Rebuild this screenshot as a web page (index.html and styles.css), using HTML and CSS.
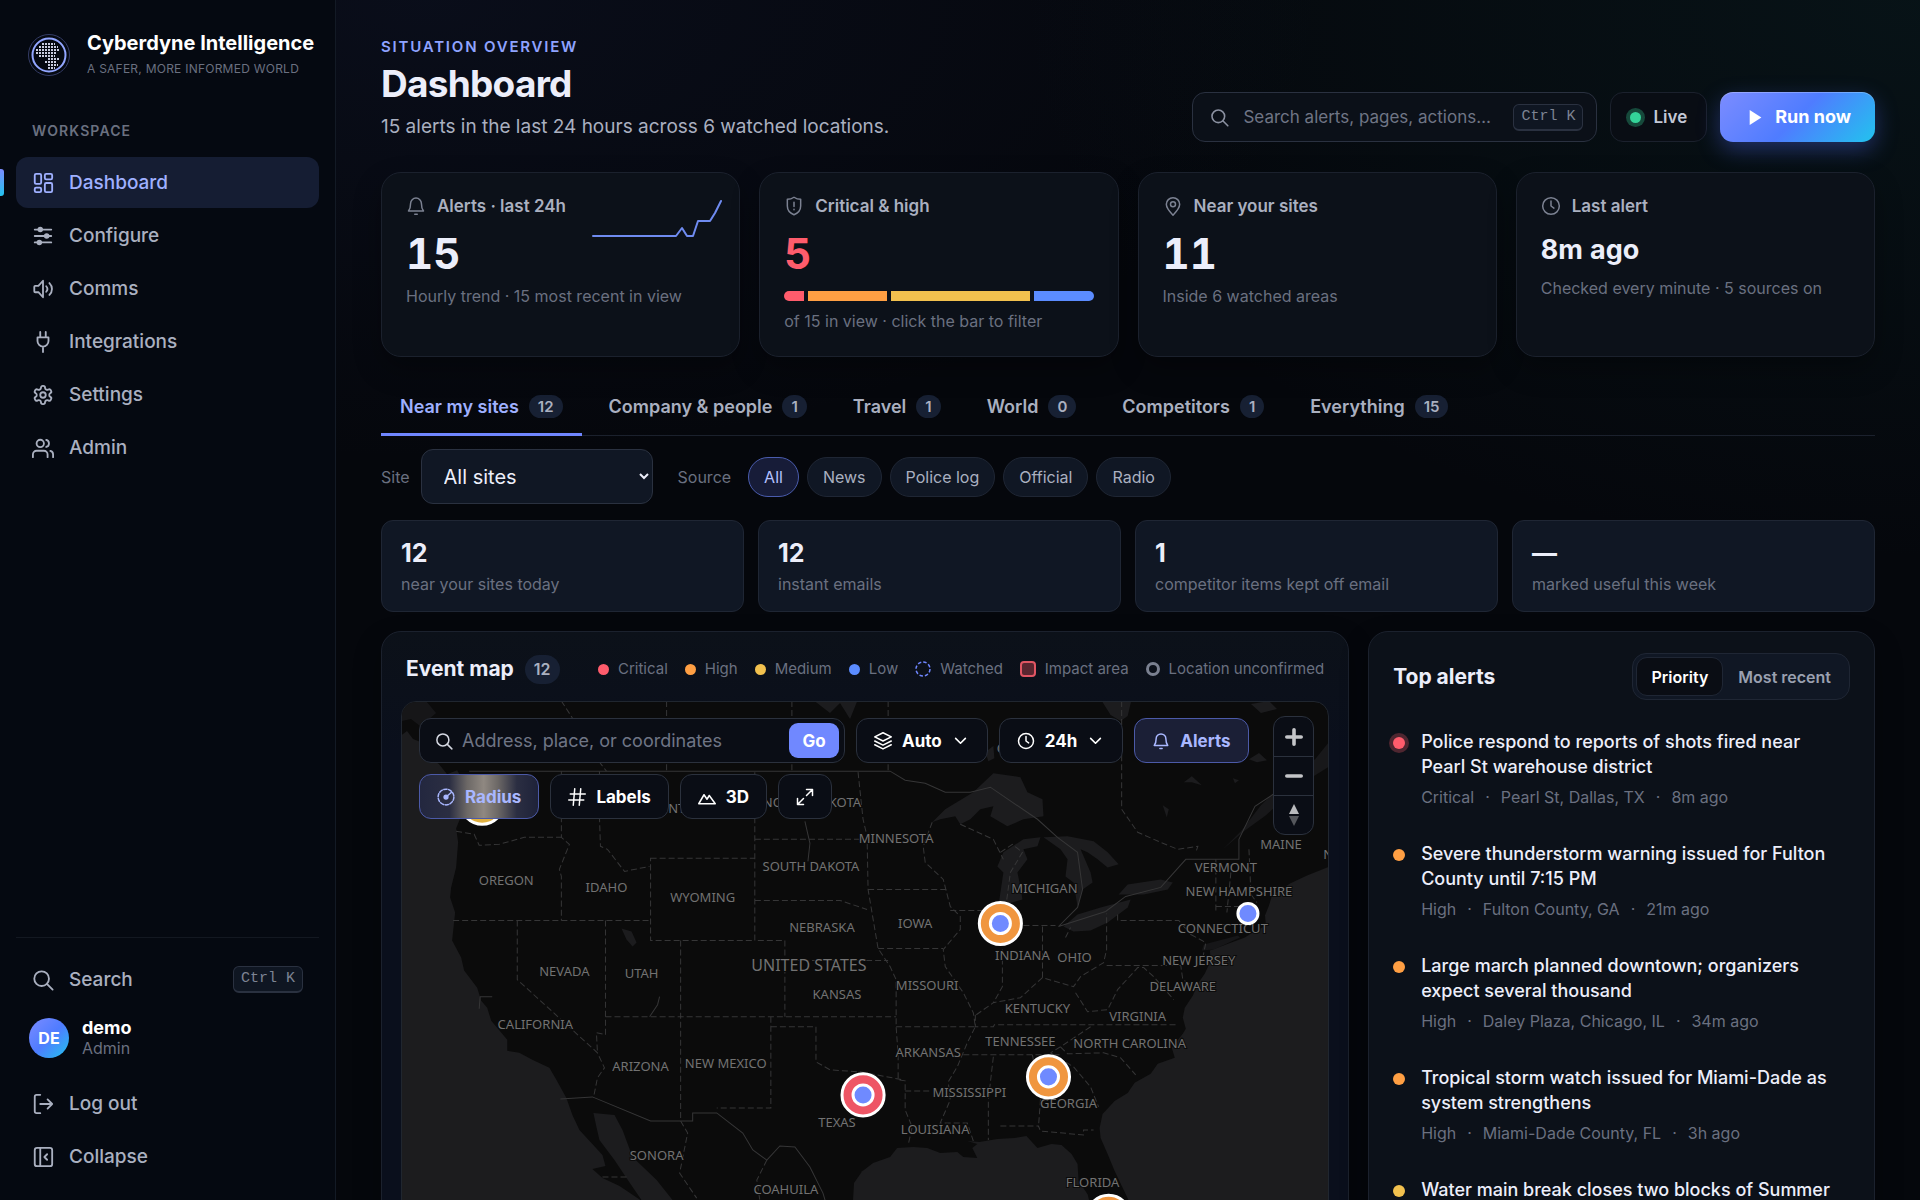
FILE: index.html
```html
<!DOCTYPE html>
<html lang="en">
<head>
<meta charset="utf-8">
<meta name="viewport" content="width=device-width, initial-scale=1">
<title>Dashboard · Cyberdyne Intelligence</title>
<link rel="stylesheet" href="styles.css">
</head>
<body>
<svg class="sprite" aria-hidden="true">
  <defs>
    <symbol id="i-dashboard" viewBox="0 0 24 24"><rect x="3" y="2" width="7" height="11" rx="1.5"/><rect x="14" y="2" width="8" height="6" rx="1.5"/><rect x="14" y="12" width="8" height="10" rx="1.5"/><rect x="3" y="17" width="7" height="5" rx="1.5"/></symbol>
    <symbol id="i-sliders" viewBox="0 0 24 24"><path d="M3 5h18M3 12h18M3 19h18"/><g fill="currentColor"><circle cx="9" cy="5" r="2"/><circle cx="16" cy="12" r="2"/><circle cx="8" cy="19" r="2"/></g></symbol>
    <symbol id="i-sound" viewBox="0 0 24 24"><path d="M12 3 7 8.500H3.500a1 1 0 0 0-1 1v5a1 1 0 0 0 1 1H7l5 5.500zM15.500 9a4.500 4.500 0 0 1 0 6M19 5.500a9 9 0 0 1 0 13"/></symbol>
    <symbol id="i-plug" viewBox="0 0 24 24"><path d="M9 1v6M15 1v6M12 17v6M6 7h12v4a6 6 0 0 1-12 0z"/></symbol>
    <symbol id="i-gear" viewBox="0 0 24 24"><path d="M12.220 2h-.44a2 2 0 0 0-2 2v.18a2 2 0 0 1-1 1.730l-.43.25a2 2 0 0 1-2 0l-.15-.08a2 2 0 0 0-2.730.73l-.22.38a2 2 0 0 0 .73 2.730l.15.1a2 2 0 0 1 1 1.720v.51a2 2 0 0 1-1 1.740l-.15.09a2 2 0 0 0-.73 2.730l.22.38a2 2 0 0 0 2.730.73l.15-.08a2 2 0 0 1 2 0l.43.25a2 2 0 0 1 1 1.730V20a2 2 0 0 0 2 2h.44a2 2 0 0 0 2-2v-.18a2 2 0 0 1 1-1.730l.43-.25a2 2 0 0 1 2 0l.15.08a2 2 0 0 0 2.730-.73l.22-.39a2 2 0 0 0-.73-2.730l-.15-.08a2 2 0 0 1-1-1.740v-.5a2 2 0 0 1 1-1.740l.15-.09a2 2 0 0 0 .73-2.730l-.22-.38a2 2 0 0 0-2.730-.73l-.15.08a2 2 0 0 1-2 0l-.43-.25a2 2 0 0 1-1-1.730V4a2 2 0 0 0-2-2z"/><circle cx="12" cy="12" r="3"/></symbol>
    <symbol id="i-users" viewBox="0 0 24 24"><path d="M17 22v-3a4 4 0 0 0-4-4H5a4 4 0 0 0-4 4v3M23 22v-3a4 4 0 0 0-3-3.870M15.500 3.130a4 4 0 0 1 0 7.750"/><circle cx="9" cy="7" r="4"/></symbol>
    <symbol id="i-search" viewBox="0 0 24 24"><circle cx="10.500" cy="10.500" r="8"/><path d="m16.500 16.500 6 6"/></symbol>
    <symbol id="i-logout" viewBox="0 0 24 24"><path d="M9 22H5a2 2 0 0 1-2-2V4a2 2 0 0 1 2-2h4M17 17l5-5-5-5M22 12H9"/></symbol>
    <symbol id="i-collapse" viewBox="0 0 24 24"><rect x="3" y="2" width="19" height="20" rx="2.500"/><path d="M9 2v20M16.500 9l-3 3 3 3"/></symbol>
    <symbol id="i-bell" viewBox="0 0 24 24"><path d="M3 18c2-2.500 2.500-5 2.500-9a6.500 6.500 0 0 1 13 0c0 4 .5 6.500 2.500 9zM10.500 22h3"/></symbol>
    <symbol id="i-shield" viewBox="0 0 24 24"><path d="M12 1.500c2.500 1.700 5 2.500 8 2.500v8c0 5-3 8.500-8 10.500-5-2-8-5.500-8-10.500V4c3 0 5.500-.8 8-2.500zM12 7.500v5M12 16v.5"/></symbol>
    <symbol id="i-pin" viewBox="0 0 24 24"><path d="M20 10c0 5-4.500 9.500-8 13-3.500-3.500-8-8-8-13a8 8 0 0 1 16 0z"/><circle cx="12" cy="10" r="3"/></symbol>
    <symbol id="i-clock" viewBox="0 0 24 24"><circle cx="12" cy="12" r="10"/><path d="M12 6v6l3.500 2.500"/></symbol>
    <symbol id="i-layers" viewBox="0 0 24 24"><path d="m12 1 11 5.500L12 12 1 6.500zM1 12l11 5.500L23 12M1 17l11 5.500L23 17"/></symbol>
    <symbol id="i-chevron" viewBox="0 0 24 24"><path d="m3 8 9 9 9-9"/></symbol>
    <symbol id="i-radius" viewBox="0 0 24 24"><circle cx="12" cy="12" r="10.500" stroke-dasharray="4.400 2.200"/><circle cx="12" cy="12" r="2.500" fill="currentColor"/><path d="m12 12 7-6"/></symbol>
    <symbol id="i-hash" viewBox="0 0 24 24"><path d="M3 8h20M1 16h20M9 1 7 23M17 1l-2 22"/></symbol>
    <symbol id="i-mountain" viewBox="0 0 24 24"><path d="M1 21 8 9l4 6 3-5 8 11z"/></symbol>
    <symbol id="i-expand" viewBox="0 0 24 24"><path d="M14 2h8v8M22 2l-8 8M10 22H2v-8M2 22l8-8"/></symbol>
    <linearGradient id="spark-fill" x1="0" y1="0" x2="0" y2="1"><stop offset="0" stop-color="#6f86ff" stop-opacity=".35"/><stop offset="1" stop-color="#6f86ff" stop-opacity="0"/></linearGradient>
  </defs>
</svg>

<div class="app">
  <aside class="sidebar">
    <div class="brand">
      <svg class="brand-mark" viewBox="0 0 44 44" aria-hidden="true">
        <circle cx="22" cy="22" r="20.500" stroke="#343c66" stroke-width="1"/>
        <circle cx="22" cy="22" r="16.500" stroke="#92a6ff" stroke-width="2"/>
        <g class="globe-dots">
          <path d="M15 11h13M12 14h19M9 17h24M9 20h21M12 23h16M21 26h11M18 29h12M21 32h10M21 35h7"/>
        </g>
      </svg>
      <div>
        <p class="brand-name">Cyberdyne Intelligence</p>
        <p class="brand-tag">A safer, more informed world</p>
      </div>
    </div>
    <p class="nav-label">Workspace</p>
    <nav class="nav">
      <a class="nav-item is-active" href="#dashboard"><svg class="icon"><use href="#i-dashboard"/></svg>Dashboard</a>
      <a class="nav-item" href="#configure"><svg class="icon"><use href="#i-sliders"/></svg>Configure</a>
      <a class="nav-item" href="#comms"><svg class="icon"><use href="#i-sound"/></svg>Comms</a>
      <a class="nav-item" href="#integrations"><svg class="icon"><use href="#i-plug"/></svg>Integrations</a>
      <a class="nav-item" href="#settings"><svg class="icon"><use href="#i-gear"/></svg>Settings</a>
      <a class="nav-item" href="#admin"><svg class="icon"><use href="#i-users"/></svg>Admin</a>
    </nav>
    <div class="sidebar-foot">
      <button class="nav-item" type="button"><svg class="icon"><use href="#i-search"/></svg>Search<kbd>Ctrl K</kbd></button>
      <div class="user">
        <span class="avatar">DE</span>
        <div><p class="user-name">demo</p><p class="user-role">Admin</p></div>
      </div>
      <button class="nav-item" type="button"><svg class="icon"><use href="#i-logout"/></svg>Log out</button>
      <button class="nav-item" type="button"><svg class="icon"><use href="#i-collapse"/></svg>Collapse</button>
    </div>
  </aside>

  <main class="main">
    <header class="page-head">
      <div>
        <p class="eyebrow">Situation overview</p>
        <h1>Dashboard</h1>
        <p class="lede">15 alerts in the last 24 hours across 6 watched locations.</p>
      </div>
      <div class="head-actions">
        <label class="search"><svg class="icon"><use href="#i-search"/></svg><input type="text" placeholder="Search alerts, pages, actions…" aria-label="Search alerts, pages, actions"><kbd>Ctrl K</kbd></label>
        <button class="live" type="button"><span class="live-dot"></span>Live</button>
        <button class="run" type="button"><svg viewBox="0 0 12 16" aria-hidden="true"><path d="M1 1v14l11-7z"/></svg>Run now</button>
      </div>
    </header>

    <section class="stats">
      <article class="card">
        <h2 class="card-label"><svg class="icon"><use href="#i-bell"/></svg>Alerts · last 24h</h2>
        <p class="value">15</p>
        <p class="note">Hourly trend · 15 most recent in view</p>
        <svg class="spark" viewBox="0 0 132 40" aria-hidden="true">
          <path fill="url(#spark-fill)" d="M3 37h83l6-8 5 8h6l5-15h12l5-8 6-12v35z"/>
          <path class="spark-line" d="M3 37h83l6-8 5 8h6l5-15h12l5-8 6-12"/>
        </svg>
      </article>
      <article class="card">
        <h2 class="card-label"><svg class="icon"><use href="#i-shield"/></svg>Critical &amp; high</h2>
        <p class="value is-critical">5</p>
        <div class="sevbar">
          <button class="bg-critical" type="button" style="flex-grow:1" aria-label="Critical: 1"></button>
          <button class="bg-high" type="button" style="flex-grow:4" aria-label="High: 4"></button>
          <button class="bg-medium" type="button" style="flex-grow:7" aria-label="Medium: 7"></button>
          <button class="bg-low" type="button" style="flex-grow:3" aria-label="Low: 3"></button>
        </div>
        <p class="note">of 15 in view · click the bar to filter</p>
      </article>
      <article class="card">
        <h2 class="card-label"><svg class="icon"><use href="#i-pin"/></svg>Near your sites</h2>
        <p class="value">11</p>
        <p class="note">Inside 6 watched areas</p>
      </article>
      <article class="card">
        <h2 class="card-label"><svg class="icon"><use href="#i-clock"/></svg>Last alert</h2>
        <p class="value is-text">8m ago</p>
        <p class="note">Checked every minute · 5 sources on</p>
      </article>
    </section>

    <div class="tabs" role="tablist">
      <button class="tab is-active" role="tab" aria-selected="true" type="button">Near my sites<span class="count">12</span></button>
      <button class="tab" role="tab" type="button">Company &amp; people<span class="count">1</span></button>
      <button class="tab" role="tab" type="button">Travel<span class="count">1</span></button>
      <button class="tab" role="tab" type="button">World<span class="count">0</span></button>
      <button class="tab" role="tab" type="button">Competitors<span class="count">1</span></button>
      <button class="tab" role="tab" type="button">Everything<span class="count">15</span></button>
    </div>

    <div class="filters">
      <label for="site">Site</label>
      <select id="site"><option>All sites</option></select>
      <span class="source-label">Source</span>
      <div class="pills">
        <button class="pill is-active" type="button">All</button>
        <button class="pill" type="button">News</button>
        <button class="pill" type="button">Police log</button>
        <button class="pill" type="button">Official</button>
        <button class="pill" type="button">Radio</button>
      </div>
    </div>

    <section class="minis">
      <div class="mini"><p class="mini-value">12</p><p class="mini-note">near your sites today</p></div>
      <div class="mini"><p class="mini-value">12</p><p class="mini-note">instant emails</p></div>
      <div class="mini"><p class="mini-value">1</p><p class="mini-note">competitor items kept off email</p></div>
      <div class="mini"><p class="mini-value">—</p><p class="mini-note">marked useful this week</p></div>
    </section>

    <div class="panels">
      <section class="panel map-panel">
        <header class="map-head">
          <h2>Event map</h2><span class="count count-lg">12</span>
          <ul class="legend">
            <li><i class="dot bg-critical"></i>Critical</li>
            <li><i class="dot bg-high"></i>High</li>
            <li><i class="dot bg-medium"></i>Medium</li>
            <li><i class="dot bg-low"></i>Low</li>
            <li><svg class="mark" viewBox="0 0 16 16"><circle cx="8" cy="8" r="7" stroke="#6f86ff" stroke-width="1.500" stroke-dasharray="3.500 2"/></svg>Watched</li>
            <li><i class="mark mark-area"></i>Impact area</li>
            <li><i class="mark-ring"></i>Location unconfirmed</li>
          </ul>
        </header>
        <div class="map">
          <svg class="map-canvas" viewBox="403 703 924 620" preserveAspectRatio="xMidYMin slice" role="img" aria-label="Map of the United States">
            <g class="water">
              <path d="M400 738l8-6 6 8 10 4-2 8 9 6 9 7 8 10 10-4 8 14-6 16 2 16-5 12 2 14-2 25-5 20-1 10 5 15-3 28 9 17 3 13 13 17 4 13 6 7 4 13 16 19v11l12 2 13 7 17 8 7 12 10 18 6 17 7 15 12 13 11 12 3 11-13 3 10 9 17 8 30 20v120H400z"/>
              <path d="M594 1113l21 2 8 15 10 27 24 23 16 20 20 40h-30l-21-40-15-22-12-18-15-20-3-13z"/>
              <path d="M853 1200l1-17 9-13-3 3 13-10 17-6 7-9 16-1 14 1 13 5 17-1 6 5 14 1-5-10 5-4-10-3 12 1 18-3 17-1 12-2 11 12 14-4 10 1 10 9 6 10 1 17 9 13 10 40 20 20 20-30-10-26-13-27-7-17-7-16-1-10 3-14 12-13 13-8 7-10 16-9 7-10 17-6-3-10 11-14 3-5-3-11 2-10 8-12 5-12 7-10 6-13-1-10 35-13 6-4 15-8-1-10 4-10 3-10 18-12 17-8 20-8 12-2v480H840z"/>
              <path d="M932 823l13-13 28-17 20-19 27 4 7 15 15 7 1 17-20 3-16 7-17-10 3-10-13 3-10 10-10 5-5-8-15 3z"/>
              <path d="M1040 838l-17 2-20 13-6 14 6 6-5 34 24-7-2-13-3-14 10-13-4-10 14-3z"/>
              <path d="M1043 838l24-1 26 5 14 11 11 12-11 3-10-8-10-7-7-3 10 23 2 10-10 7-5 17-4-24-8-6 2-17-7-10z"/>
              <path d="M1063 927l14-12 23-7 30-8-3 8-20 15-17 8-17 1z"/>
              <path d="M1118 895l9-10 33-5 12 3-5 7-24 5z"/>
              <path d="M1222 850l18-18 20-26 26-26 28-20 13-16v24l-32 20-30 28-22 16z" opacity=".8"/>
              <path d="M1100 700h31l-4 17-7 5-10-6zM622 929l10 3 5 11-4 4-6-7zM985 753l8-6 1 12-6 3zM1250 705l18-3 8 8-16 4zM1183 783l8-6 10 9-10-3zM1248 760l10-6 8 7-10 2zM1162 806l6 4-2 8zM1232 779l6 2-4 3zM812 700l18 14 10-10 10 16 8-20z"/>
            </g>
            <g class="land-shade"><path d="M1203 945l34-9 2 2-26 12-12 1zM403 702h24l10 12-9 8 10 10-8 2-18-14-9 2z"/></g>
            <g class="border-solid">
              <path d="M470 772h420l15 9 20 3 20 9h25l20-5 47 32 20 18 20 15 5 37-5 18-19 19 47-15 20-15 35-9 25-28h53v-20l16-33 23-15 20-60M561 1099l32-2 58 24h42v-8h24l26 20 10 17 14 10 13-14 15 1 15 20 13 26 6 20"/>
              <path d="M480 1009l1-12h12M650 1017l8-12 2-8M805 822l5 22-2 18"/>
            </g>
            <g class="border">
              <path d="M457 832l18 3 5 11 20-1 25-7h39M562 702l11 17 24 30 3 14 7 9M667 702v70M792 702v70M888 702v70M562 772v66l8 7-10 25 2 7v44M454 921h197M518 921v59l80 73 7 15-7 10-4 20M606 921v114l-9-2 1 20M600 772v45l1 30 7 3 17 22 25-5M651 859h104v82H651zM755 773v168h30v76M681 941v180l7 12-8 40 17 25M606 1017h290M755 840h107M755 901h85l27 9M858 773l5 47 4 17 1 53 10 59 12 18 6 13v47l2 28v25l7 1v29l7 17-4 18M868 890h79M878 949h65M785 961h103M771 1017v91h-54M771 1027h45v35l14 8 30 2 43 8M767 1160l-10 20 3 20M603 1177h24"/>
              <path d="M932 823l-9 24 2 16 18 17 7 27 10 10v13l-17 20 2 17 18 26 10 20 2 14-8 16-10 24-9 15 2 18-10 23h27l6 18M960 825l33 15 10 20M950 911h34M1042 927v53M1023 926h32M1002 950v37l-9 16M976 1015l17-12 27-5 22-20 31 9 7-10 23-14 3-13v-36M1117 915v6h61l12 14M1106 966h74l2 14 8 5M1075 993l12 19 20-2 10-20 20-22h6l10 9 20 23M896 1027h79M975 1015v12h18l1-2h181M963 1055h97M1090 1027l-30 20-10 6M993 1057l-5 43v40M1032 1055l8 45-2 27M1000 1126h38l2 5 43 4v-5h10M905 1091h27M1050 1053l23 14 17 20 8 20M1060 1047l7 7 36-1 17 5 15 17M1121 702v108l16 23 23 10 17 7 20-3-2 6M1065 938l5-10M1215 860v52M1230 873l-4 40M1248 850l2 45 6 8M1215 907h36M1212 925h34M1190 935l15 8-3 15M1000 853l12-8 10 8-12 20-4 30"/>
            </g>
            <g class="map-labels">
              <text x="679" y="814">MONTANA</text><text x="812" y="808">NORTH DAKOTA</text><text x="1025" y="754">ONTARIO</text><text x="1327" y="860">N</text>
              <text x="507" y="886">OREGON</text><text x="607" y="893">IDAHO</text><text x="703" y="903">WYOMING</text><text x="811" y="872">SOUTH DAKOTA</text>
              <text x="822" y="932">NEBRASKA</text><text x="915" y="928">IOWA</text><text x="896" y="844">MINNESOTA</text><text x="1044" y="894">MICHIGAN</text>
              <text x="1225" y="873">VERMONT</text><text x="1238" y="897">NEW HAMPSHIRE</text><text x="1280" y="850">MAINE</text><text x="1222" y="933">CONNECTICUT</text>
              <text x="1022" y="960">INDIANA</text><text x="1074" y="962">OHIO</text><text x="1198" y="965">NEW JERSEY</text><text x="1182" y="991">DELAWARE</text>
              <text x="927" y="990">MISSOURI</text><text x="1037" y="1013">KENTUCKY</text><text x="1137" y="1021">VIRGINIA</text><text x="1020" y="1046">TENNESSEE</text>
              <text x="1129" y="1048">NORTH CAROLINA</text><text x="928" y="1057">ARKANSAS</text><text x="565" y="976">NEVADA</text><text x="642" y="978">UTAH</text>
              <text class="country" x="809" y="971">UNITED STATES</text><text x="837" y="999">KANSAS</text><text x="536" y="1029">CALIFORNIA</text><text x="641" y="1071">ARIZONA</text>
              <text x="726" y="1068">NEW MEXICO</text><text x="837" y="1127">TEXAS</text><text x="657" y="1160">SONORA</text><text x="786" y="1194">COAHUILA</text>
              <text x="969" y="1097">MISSISSIPPI</text><text x="935" y="1134">LOUISIANA</text><text x="1068" y="1108">GEORGIA</text><text x="1092" y="1187">FLORIDA</text>
            </g>
            <g class="pins">
              <circle class="p-medium" cx="483" cy="804" r="21"/><circle class="p-site" cx="483" cy="804" r="10"/>
              <circle class="p-high" cx="1000" cy="924" r="21"/><circle class="p-site" cx="1000" cy="924" r="10"/>
              <circle class="p-high" cx="1048" cy="1077" r="21"/><circle class="p-site" cx="1048" cy="1077" r="10"/>
              <circle class="p-critical" cx="863" cy="1095" r="21"/><circle class="p-site" cx="863" cy="1095" r="10"/>
              <circle class="p-high" cx="1108" cy="1216" r="21"/><circle class="p-site" cx="1108" cy="1216" r="10"/>
              <circle class="p-site" cx="1247" cy="914" r="10"/>
            </g>
          </svg>
          <div class="map-tools">
            <form class="map-search"><svg class="icon"><use href="#i-search"/></svg><input type="text" placeholder="Address, place, or coordinates" aria-label="Address, place, or coordinates"><button type="submit">Go</button></form>
            <button class="tool" type="button"><svg class="icon"><use href="#i-layers"/></svg>Auto<svg class="icon icon-sm"><use href="#i-chevron"/></svg></button>
            <button class="tool" type="button"><svg class="icon"><use href="#i-clock"/></svg>24h<svg class="icon icon-sm"><use href="#i-chevron"/></svg></button>
            <button class="tool is-active" type="button"><svg class="icon"><use href="#i-bell"/></svg>Alerts</button>
            <button class="tool is-active is-frosted" type="button"><svg class="icon"><use href="#i-radius"/></svg>Radius</button>
            <button class="tool" type="button"><svg class="icon"><use href="#i-hash"/></svg>Labels</button>
            <button class="tool" type="button"><svg class="icon"><use href="#i-mountain"/></svg>3D</button>
            <button class="tool" type="button" aria-label="Full screen"><svg class="icon"><use href="#i-expand"/></svg></button>
          </div>
          <div class="zoom">
            <button type="button" aria-label="Zoom in"><svg viewBox="0 0 20 20"><path class="stroke" d="M10 4v12M4 10h12"/></svg></button>
            <button type="button" aria-label="Zoom out"><svg viewBox="0 0 20 20"><path class="stroke" d="M4 10h12"/></svg></button>
            <button type="button" aria-label="Reset north"><svg viewBox="0 0 20 24"><path fill="#b9babd" d="M10 1l5 10H5z"/><path fill="#55575c" d="M10 23l5-10H5z"/></svg></button>
          </div>
        </div>
      </section>

      <section class="panel alerts-panel">
        <header class="alerts-head">
          <h2>Top alerts</h2>
          <div class="segmented"><button class="is-active" type="button">Priority</button><button type="button">Most recent</button></div>
        </header>
        <ul class="alerts">
          <li><i class="dot bg-critical has-halo"></i><div><h3>Police respond to reports of shots fired near Pearl St warehouse district</h3><p><span>Critical</span><span>·</span><span>Pearl St, Dallas, TX</span><span>·</span><span>8m ago</span></p></div></li>
          <li><i class="dot bg-high"></i><div><h3>Severe thunderstorm warning issued for Fulton County until 7:15 PM</h3><p><span>High</span><span>·</span><span>Fulton County, GA</span><span>·</span><span>21m ago</span></p></div></li>
          <li><i class="dot bg-high"></i><div><h3>Large march planned downtown; organizers expect several thousand</h3><p><span>High</span><span>·</span><span>Daley Plaza, Chicago, IL</span><span>·</span><span>34m ago</span></p></div></li>
          <li><i class="dot bg-high"></i><div><h3>Tropical storm watch issued for Miami-Dade as system strengthens</h3><p><span>High</span><span>·</span><span>Miami-Dade County, FL</span><span>·</span><span>3h ago</span></p></div></li>
          <li><i class="dot bg-medium"></i><div><h3>Water main break closes two blocks of Summer</h3></div></li>
        </ul>
      </section>
    </div>
  </main>
</div>
</body>
</html>
```
FILE: styles.css
```css
:root {
  --bg: #05070c;
  --card: #0c1119;
  --raised: #101724;
  --line: #1b212d;
  --line-strong: #2a3140;
  --text: #eceefa;
  --soft: #aab0c0;
  --muted: #6a7080;
  --accent: #6f86ff;
  --accent-text: #9fb0ff;
  --critical: #ff5c6c;
  --high: #ff9f43;
  --medium: #f2c14e;
  --low: #5b8cff;
  --grad: linear-gradient(135deg, #7c8cff, #4f7cff 50%, #22c3ee);
}

* { box-sizing: border-box; }
html, body { height: 100%; }
body {
  margin: 0;
  background: var(--bg);
  color: var(--text);
  font-family: Inter, "Liberation Sans", sans-serif;
  font-size: 17px;
  line-height: 20px;
}
h1, h2, h3, p, ul { margin: 0; padding: 0; font-weight: inherit; }
ul { list-style: none; }
button, input, select { font: inherit; color: inherit; }
button { background: none; border: 0; padding: 0; cursor: pointer; }
a { color: inherit; text-decoration: none; }

.sprite { display: none; }
.icon {
  width: 22px;
  height: 22px;
  flex: none;
  fill: none;
  stroke: currentColor;
  stroke-width: 2;
  stroke-linecap: round;
  stroke-linejoin: round;
}
.icon-sm { width: 14px; height: 14px; stroke-width: 3; }

kbd {
  flex: none;
  padding: 2px 7px;
  border: 1px solid var(--line-strong);
  border-bottom-width: 2px;
  border-radius: 6px;
  background: #0f1622;
  color: #7d8494;
  font: 15px/20px "Liberation Mono", monospace;
}

.bg-critical { background: var(--critical); }
.bg-high { background: var(--high); }
.bg-medium { background: var(--medium); }
.bg-low { background: var(--low); }

/* Shell */
.app {
  display: grid;
  grid-template-columns: 336px minmax(0, 1fr);
  height: 100vh;
  background:
    radial-gradient(900px 560px at 100% 0, rgba(20, 80, 80, .16), transparent),
    radial-gradient(900px 460px at 22% 0, rgba(36, 50, 105, .15), transparent),
    var(--bg);
}

/* Sidebar */
.sidebar {
  display: flex;
  flex-direction: column;
  padding: 32px 16px 18px;
  border-right: 1px solid #131a25;
  background: #050911;
}
.brand { display: flex; align-items: center; gap: 16px; height: 46px; padding-left: 11px; }
.brand-mark { width: 44px; height: 44px; flex: none; fill: none; }
.globe-dots { stroke: #c9cde0; stroke-width: 2; stroke-dasharray: 2 1; }
.brand-name { font-size: 20px; font-weight: 700; line-height: 24px; white-space: nowrap; color: #fff; }
.brand-tag { margin-top: 4px; font-size: 12px; line-height: 20px; text-transform: uppercase; letter-spacing: .02em; color: var(--muted); white-space: nowrap; }
.nav-label { margin-top: 43px; padding-left: 16px; font-size: 14px; font-weight: 600; line-height: 20px; letter-spacing: .08em; text-transform: uppercase; color: var(--muted); }
.nav { display: flex; flex-direction: column; gap: 2px; margin-top: 16px; }
.nav-item {
  position: relative;
  display: flex;
  align-items: center;
  gap: 15px;
  width: 100%;
  height: 51px;
  padding: 0 16px;
  border-radius: 12px;
  font-size: 19px;
  font-weight: 500;
  text-align: left;
  color: var(--soft);
}
.nav-item.is-active { background: #151d33; color: var(--accent-text); }
.nav-item.is-active::before {
  content: "";
  position: absolute;
  left: -16px;
  top: 12px;
  width: 4px;
  height: 27px;
  border-radius: 0 3px 3px 0;
  background: linear-gradient(#7c8cff, #22c3ee);
}
.nav-item kbd { margin-left: auto; }
.sidebar-foot { display: flex; flex-direction: column; gap: 2px; margin-top: auto; padding-top: 16px; border-top: 1px solid #131821; }
.user { display: flex; align-items: center; gap: 13px; height: 66px; padding: 0 13px 4px; margin-bottom: 3px; }
.avatar {
  display: grid;
  place-items: center;
  width: 40px;
  height: 40px;
  border-radius: 50%;
  background: var(--grad);
  font-size: 16px;
  font-weight: 700;
  color: #fff;
}
.user-name { font-size: 18px; font-weight: 700; color: #fff; }
.user-role { font-size: 16px; color: var(--muted); }

/* Page head */
.main { padding: 37px 45px 40px; overflow-y: auto; scrollbar-width: none; }
.page-head { display: flex; justify-content: space-between; align-items: flex-end; gap: 32px; }
.eyebrow { font-size: 15px; font-weight: 600; letter-spacing: .12em; text-transform: uppercase; color: #8fa3ff; }
h1 { margin-top: 4px; font-size: 37px; font-weight: 700; line-height: 46px; letter-spacing: -.02em; }
.lede { margin: 7px 0 2px; font-size: 19px; line-height: 26px; color: var(--soft); }
.head-actions { display: flex; gap: 13px; height: 50px; }
.search { display: flex; align-items: center; gap: 14px; width: 405px; padding: 0 13px 0 17px; border: 1px solid var(--line-strong); border-radius: 13px; background: #0b1018; color: #8b91a1; }
.search .icon { width: 19px; height: 19px; }
.search input { flex: 1; min-width: 0; padding: 0; border: 0; outline: 0; background: none; font-size: 17px; text-overflow: ellipsis; }
.search kbd { margin-left: -8px; }
input::placeholder { color: #6f7585; opacity: 1; }
.live { display: flex; align-items: center; gap: 8px; padding: 0 19px 0 15px; border: 1px solid var(--line); border-radius: 13px; background: #090d14; font-weight: 600; color: #c3c8d6; }
.live-dot { width: 11px; height: 11px; margin: 0 4px; border-radius: 50%; background: #34d399; box-shadow: 0 0 0 4px rgba(52, 211, 153, .3); }
.run { display: flex; align-items: center; gap: 13px; padding: 0 24px 0 28px; border-radius: 13px; background: var(--grad); box-shadow: 0 8px 22px rgba(79, 110, 255, .35), inset 0 1px 0 rgba(255, 255, 255, .25); font-size: 18px; font-weight: 700; color: #fff; }
.run svg { width: 14px; height: 17px; fill: #fff; }

/* Stat cards */
.stats { display: grid; grid-template-columns: repeat(4, minmax(0, 1fr)); gap: 19px; margin-top: 30px; }
.card { position: relative; min-height: 185px; padding: 21px 24px; border: 1px solid var(--line); border-radius: 20px; background: var(--card); box-shadow: 0 12px 28px rgba(0, 0, 0, .3); }
.card-label { display: flex; align-items: center; gap: 11px; height: 24px; font-size: 17px; font-weight: 600; color: var(--soft); }
.card-label .icon { width: 20px; height: 20px; stroke-width: 1.8; color: #7c8292; }
.value { margin-top: 10px; font-size: 42px; font-weight: 700; line-height: 52px; font-variant-numeric: tabular-nums; }
.value.is-critical { color: var(--critical); }
.value.is-text { font-size: 27px; line-height: 44px; }
.note { margin-top: 5px; font-size: 16px; line-height: 22px; color: var(--muted); }
.spark { position: absolute; top: 26px; right: 17px; width: 132px; height: 40px; }
.spark-line { fill: none; stroke: #6f8bf0; stroke-width: 2; stroke-linejoin: round; stroke-linecap: round; }
.sevbar { display: flex; gap: 4px; height: 10px; margin-top: 11px; border-radius: 5px; overflow: hidden; }
.sevbar button { flex-basis: 0; }
.sevbar + .note { margin-top: 9px; }

/* Tabs */
.tabs { display: flex; gap: 8px; margin-top: 26px; border-bottom: 1px solid var(--line); }
.tab { display: flex; align-items: center; gap: 10px; height: 53px; margin-bottom: -1px; padding: 0 19px 3px; border-bottom: 3px solid transparent; font-size: 18px; font-weight: 600; white-space: nowrap; color: var(--soft); }
.tab.is-active { border-color: var(--accent); color: var(--accent-text); }
.count { padding: 0 9px; border-radius: 12px; background: #172033; font-size: 15px; font-weight: 600; line-height: 23px; color: var(--soft); }
.count-lg { font-size: 16px; line-height: 29px; border-radius: 15px; }

/* Filters */
.filters { display: flex; align-items: center; margin-top: 13px; font-size: 16px; color: var(--muted); }
select { width: 232px; height: 55px; margin: 0 25px 0 11px; padding: 0 0 0 18px; border: 1px solid var(--line-strong); border-radius: 12px; background: var(--raised); font-size: 20px; color: var(--text); }
.pills { display: flex; gap: 8px; margin-left: 17px; }
.pill { height: 40px; padding: 0 15px; border: 1px solid #1f2634; border-radius: 20px; background: var(--raised); font-size: 16px; color: var(--soft); }
.pill.is-active { border-color: #4a5cae; background: #171c38; color: #b3c0ff; }

/* Day summary */
.minis { display: grid; grid-template-columns: repeat(4, minmax(0, 1fr)); gap: 14px; margin-top: 16px; }
.mini { padding: 17px 19px 16px; border: 1px solid #1f2634; border-radius: 12px; background: var(--raised); }
.mini-value { font-size: 25px; font-weight: 700; line-height: 30px; }
.mini-note { margin-top: 5px; font-size: 16px; line-height: 22px; color: var(--muted); }

/* Panels */
.panels { display: grid; grid-template-columns: minmax(0, 1.91fr) minmax(0, 1fr); gap: 19px; margin-top: 19px; }
.panel { border: 1px solid var(--line); border-radius: 20px; background: var(--card); box-shadow: 0 12px 28px rgba(0, 0, 0, .3); }
.panel h2 { font-size: 21px; font-weight: 700; line-height: 28px; white-space: nowrap; }
.map-panel { padding: 0 19px 19px; background: linear-gradient(#0c1119, #0a0f1c 120px); }
.map-head { display: flex; align-items: center; height: 69px; padding: 5px 5px 0; }
.map-head .count { margin-left: 11px; }
.legend { display: flex; gap: 17px; margin-left: auto; font-size: 15px; color: var(--muted); white-space: nowrap; }
.legend li { display: flex; align-items: center; gap: 9px; }
.dot { width: 11px; height: 11px; flex: none; border-radius: 50%; }
.mark { width: 16px; height: 16px; fill: none; }
.mark-area { border: 2px solid #e05563; border-radius: 4px; background: #5a2630; }
.mark-ring { width: 14px; height: 14px; border: 3px solid #7a8090; border-radius: 50%; }

.map { position: relative; height: 620px; border: 1px solid #20262f; border-radius: 15px; overflow: hidden; background: #0b0b0b; }
.map-canvas { display: block; width: 100%; height: 100%; }
.water { fill: #1c1c1e; }
.land-shade { fill: #161618; }
.border, .border-solid { fill: none; stroke: #363637; stroke-width: 1; }
.border { stroke-dasharray: 6 3; }
.map-labels { font: 13px "Noto Sans", sans-serif; fill: #727272; text-anchor: middle; paint-order: stroke; stroke: #0b0b0b; stroke-width: 2px; }
.map-labels .country { font-size: 16px; }
.pins circle { stroke: #fff; stroke-width: 3; }
.p-critical { fill: #ee5565; }
.p-high { fill: #f0963f; }
.p-medium { fill: #e0b040; }
.p-site { fill: #6f8aff; }

.map-tools { position: absolute; top: 16px; left: 17px; right: 70px; display: flex; flex-wrap: wrap; gap: 11px; }
.map-search, .tool { display: flex; align-items: center; height: 45px; border: 1px solid #2b313d; border-radius: 12px; background: #0a0d15; }
.map-search { width: 426px; gap: 9px; padding: 0 5px 0 15px; color: #d5d8e2; }
.map-search input { flex: 1; min-width: 0; padding: 0; border: 0; outline: 0; background: none; font-size: 18px; }
.map-search button { width: 50px; height: 35px; border-radius: 9px; background: #7088ff; font-size: 17px; font-weight: 700; color: #fff; }
.map-search .icon, .tool .icon { width: 18px; height: 18px; }
.tool { gap: 10px; padding: 0 17px; font-size: 17px; font-weight: 700; color: #fff; }
.tool .icon.icon-sm { width: 13px; height: 13px; margin: 0 3px 0 2px; }
.tool.is-active { border-color: #4c5aa8; background: #1b1f36; color: #a9b7ff; }
.tool.is-frosted { background: linear-gradient(90deg, #23273f, #2b2e42 25%, #6c6866 40%, #8f8881 54%, #6c6866 66%, #2b2e42 82%, #1e2239); }

.zoom { position: absolute; top: 14px; right: 14px; width: 41px; border: 1px solid #2b313d; border-radius: 12px; background: #0a0d15; overflow: hidden; }
.zoom button { display: grid; place-items: center; width: 100%; height: 39px; }
.zoom button + button { border-top: 1px solid #2b313d; }
.zoom svg { width: 24px; height: 24px; }
.zoom .stroke { fill: none; stroke: #c4c5c8; stroke-width: 3; stroke-linecap: round; }

/* Alerts */
.alerts-panel { padding: 21px 24px; }
.alerts-head { display: flex; align-items: center; justify-content: space-between; }
.segmented { display: flex; height: 47px; padding: 3px; border: 1px solid #1f2634; border-radius: 14px; background: var(--raised); }
.segmented button { padding: 0 14px; border: 1px solid transparent; border-radius: 11px; font-size: 16px; font-weight: 600; color: #9aa0b0; }
.segmented .is-active { border-color: #1f2634; background: #0a0d14; color: #fff; }
.alerts { margin-top: 29px; }
.alerts li { display: flex; gap: 16px; min-height: 112px; padding-right: 8px; }
.alerts .dot { width: 12px; height: 12px; margin-top: 8px; }
.has-halo { box-shadow: 0 0 0 4px rgba(255, 92, 108, .28); }
.alerts h3 { font-size: 18px; font-weight: 500; line-height: 25px; }
.alerts p { display: flex; gap: 11px; margin-top: 7px; font-size: 16px; line-height: 22px; color: var(--muted); }
```
